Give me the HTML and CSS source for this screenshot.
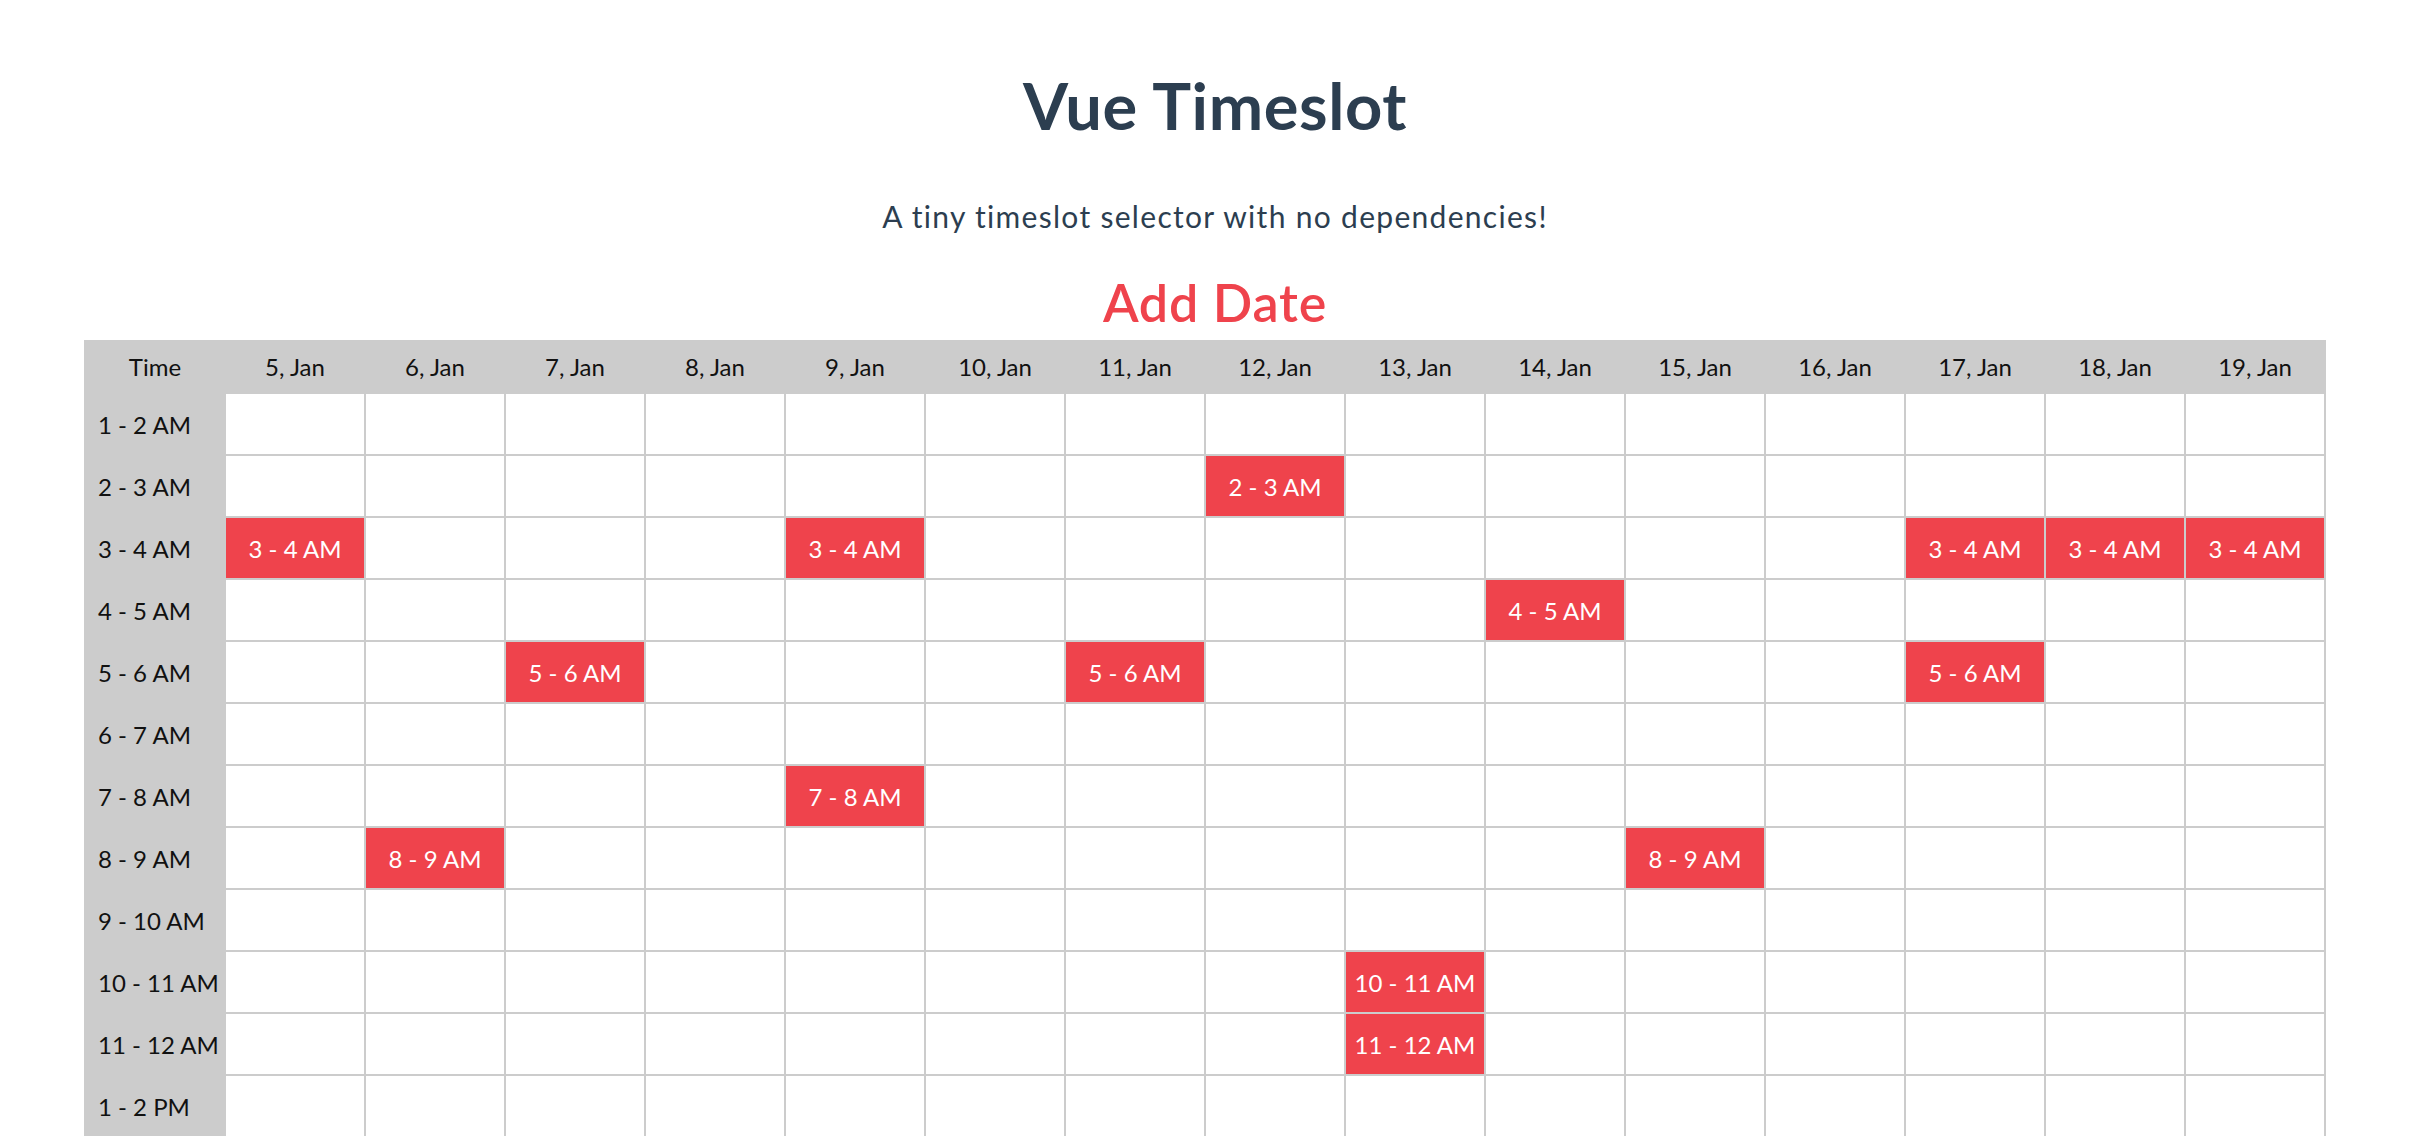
FILE: index.html
```html
<!DOCTYPE html>
<html lang="en">
<head>
<meta charset="utf-8">
<title>Vue Timeslot</title>
<link rel="stylesheet" href="styles.css">
</head>
<body>
<div class="app">
  <h1 class="title">Vue Timeslot</h1>
  <p class="subtitle">A tiny timeslot selector with no dependencies!</p>
  <div class="add-date">Add Date</div>
  <div class="grid">
    <div class="head">Time</div><div class="head">5, Jan</div><div class="head">6, Jan</div><div class="head">7, Jan</div><div class="head">8, Jan</div><div class="head">9, Jan</div><div class="head">10, Jan</div><div class="head">11, Jan</div><div class="head">12, Jan</div><div class="head">13, Jan</div><div class="head">14, Jan</div><div class="head">15, Jan</div><div class="head">16, Jan</div><div class="head">17, Jan</div><div class="head">18, Jan</div><div class="head">19, Jan</div>

    <div class="time">1 - 2 AM</div><div class="slot"></div><div class="slot"></div><div class="slot"></div><div class="slot"></div><div class="slot"></div><div class="slot"></div><div class="slot"></div><div class="slot"></div><div class="slot"></div><div class="slot"></div><div class="slot"></div><div class="slot"></div><div class="slot"></div><div class="slot"></div><div class="slot"></div>

    <div class="time">2 - 3 AM</div><div class="slot"></div><div class="slot"></div><div class="slot"></div><div class="slot"></div><div class="slot"></div><div class="slot"></div><div class="slot"></div><div class="slot selected">2 - 3 AM</div><div class="slot"></div><div class="slot"></div><div class="slot"></div><div class="slot"></div><div class="slot"></div><div class="slot"></div><div class="slot"></div>

    <div class="time">3 - 4 AM</div><div class="slot selected">3 - 4 AM</div><div class="slot"></div><div class="slot"></div><div class="slot"></div><div class="slot selected">3 - 4 AM</div><div class="slot"></div><div class="slot"></div><div class="slot"></div><div class="slot"></div><div class="slot"></div><div class="slot"></div><div class="slot"></div><div class="slot selected">3 - 4 AM</div><div class="slot selected">3 - 4 AM</div><div class="slot selected">3 - 4 AM</div>

    <div class="time">4 - 5 AM</div><div class="slot"></div><div class="slot"></div><div class="slot"></div><div class="slot"></div><div class="slot"></div><div class="slot"></div><div class="slot"></div><div class="slot"></div><div class="slot"></div><div class="slot selected">4 - 5 AM</div><div class="slot"></div><div class="slot"></div><div class="slot"></div><div class="slot"></div><div class="slot"></div>

    <div class="time">5 - 6 AM</div><div class="slot"></div><div class="slot"></div><div class="slot selected">5 - 6 AM</div><div class="slot"></div><div class="slot"></div><div class="slot"></div><div class="slot selected">5 - 6 AM</div><div class="slot"></div><div class="slot"></div><div class="slot"></div><div class="slot"></div><div class="slot"></div><div class="slot selected">5 - 6 AM</div><div class="slot"></div><div class="slot"></div>

    <div class="time">6 - 7 AM</div><div class="slot"></div><div class="slot"></div><div class="slot"></div><div class="slot"></div><div class="slot"></div><div class="slot"></div><div class="slot"></div><div class="slot"></div><div class="slot"></div><div class="slot"></div><div class="slot"></div><div class="slot"></div><div class="slot"></div><div class="slot"></div><div class="slot"></div>

    <div class="time">7 - 8 AM</div><div class="slot"></div><div class="slot"></div><div class="slot"></div><div class="slot"></div><div class="slot selected">7 - 8 AM</div><div class="slot"></div><div class="slot"></div><div class="slot"></div><div class="slot"></div><div class="slot"></div><div class="slot"></div><div class="slot"></div><div class="slot"></div><div class="slot"></div><div class="slot"></div>

    <div class="time">8 - 9 AM</div><div class="slot"></div><div class="slot selected">8 - 9 AM</div><div class="slot"></div><div class="slot"></div><div class="slot"></div><div class="slot"></div><div class="slot"></div><div class="slot"></div><div class="slot"></div><div class="slot"></div><div class="slot selected">8 - 9 AM</div><div class="slot"></div><div class="slot"></div><div class="slot"></div><div class="slot"></div>

    <div class="time">9 - 10 AM</div><div class="slot"></div><div class="slot"></div><div class="slot"></div><div class="slot"></div><div class="slot"></div><div class="slot"></div><div class="slot"></div><div class="slot"></div><div class="slot"></div><div class="slot"></div><div class="slot"></div><div class="slot"></div><div class="slot"></div><div class="slot"></div><div class="slot"></div>

    <div class="time">10 - 11 AM</div><div class="slot"></div><div class="slot"></div><div class="slot"></div><div class="slot"></div><div class="slot"></div><div class="slot"></div><div class="slot"></div><div class="slot"></div><div class="slot selected">10 - 11 AM</div><div class="slot"></div><div class="slot"></div><div class="slot"></div><div class="slot"></div><div class="slot"></div><div class="slot"></div>

    <div class="time">11 - 12 AM</div><div class="slot"></div><div class="slot"></div><div class="slot"></div><div class="slot"></div><div class="slot"></div><div class="slot"></div><div class="slot"></div><div class="slot"></div><div class="slot selected">11 - 12 AM</div><div class="slot"></div><div class="slot"></div><div class="slot"></div><div class="slot"></div><div class="slot"></div><div class="slot"></div>

    <div class="time">1 - 2 PM</div><div class="slot"></div><div class="slot"></div><div class="slot"></div><div class="slot"></div><div class="slot"></div><div class="slot"></div><div class="slot"></div><div class="slot"></div><div class="slot"></div><div class="slot"></div><div class="slot"></div><div class="slot"></div><div class="slot"></div><div class="slot"></div><div class="slot"></div>
  </div>
</div>
</body>
</html>
```

FILE: styles.css
```css
html, body {
  margin: 0;
  padding: 0;
  background: #ffffff;
}

body {
  font-family: Lato, "Noto Sans", "Liberation Sans", sans-serif;
  color: #2c3e50;
}

.app {
  display: flex;
  flex-direction: column;
  align-items: center;
  padding-top: 65px;
}

.title {
  margin: 0;
  height: 80px;
  line-height: 80px;
  font-size: 65px;
  font-weight: 700;
  letter-spacing: 0.6px;
  color: #2c3e50;
}

.subtitle {
  margin: 51px 0 0 0;
  height: 40px;
  line-height: 40px;
  font-size: 30px;
  font-weight: 400;
  letter-spacing: 1.3px;
  color: #2c3e50;
}

.add-date {
  margin-top: 36px;
  height: 60px;
  line-height: 60px;
  font-size: 52px;
  font-weight: 600;
  letter-spacing: 0.8px;
  color: #ef434c;
}

.grid {
  align-self: flex-start;
  margin: 8px 0 0 84px;
  display: grid;
  grid-template-columns: repeat(16, 138px);
  grid-auto-rows: 60px;
  grid-template-rows: 52px;
  gap: 2px;
  padding: 0 2px 2px 2px;
  background: #cccccc;
  font-size: 24px;
  color: #111111;
}

.head {
  display: flex;
  align-items: center;
  justify-content: center;
  background: #cccccc;
}

.time {
  display: flex;
  align-items: center;
  padding-left: 12px;
  background: #cccccc;
  white-space: nowrap;
}

.slot {
  display: flex;
  align-items: center;
  justify-content: center;
  background: #ffffff;
  white-space: nowrap;
}

.slot.selected {
  background: #ef434c;
  color: #ffffff;
}
```
